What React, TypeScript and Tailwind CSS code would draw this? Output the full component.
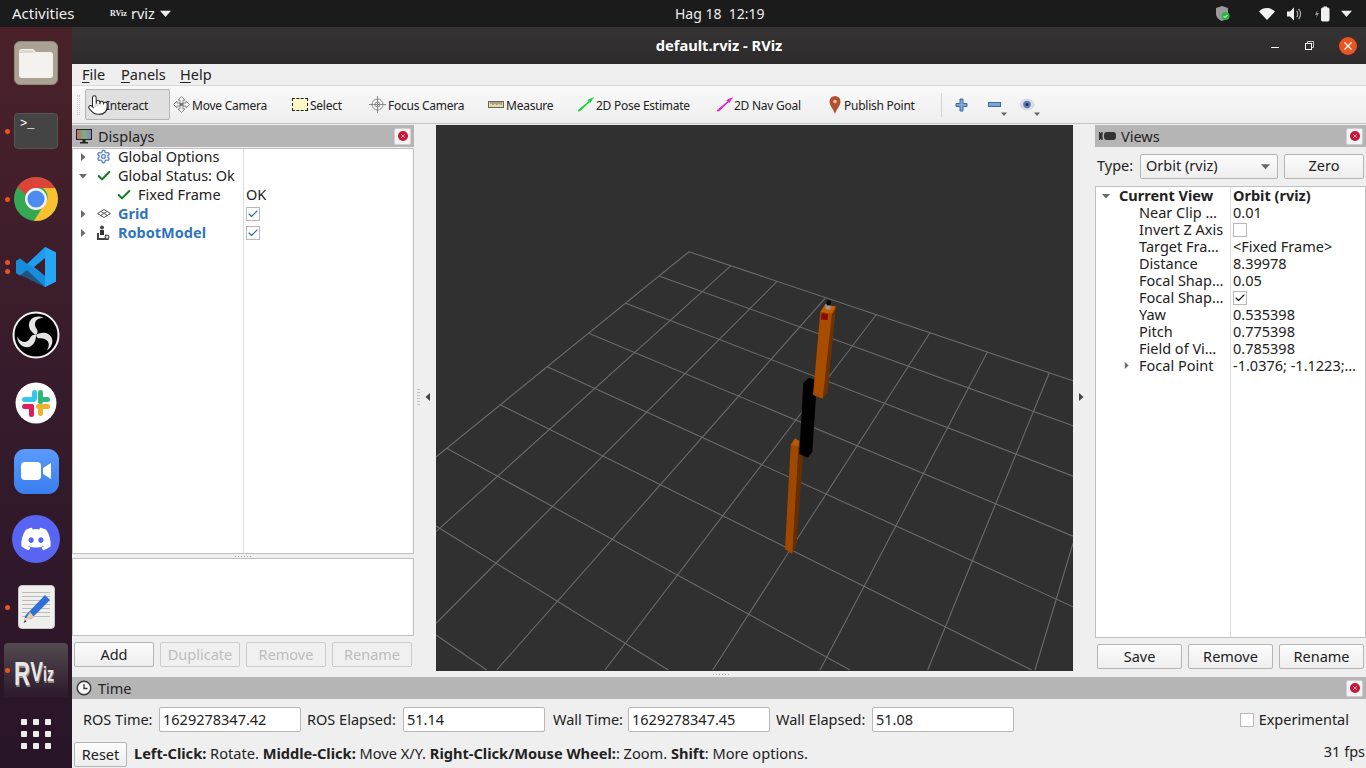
import React from "react";
import { Check, Pointer, Settings } from "lucide-react";
import { FaDiscord } from "react-icons/fa";

const Tri = ({ dir, c = "#6b6b6b", s = 8 }: { dir: "r" | "d" | "l"; c?: string; s?: number }) => (
  <svg width={s} height={s} viewBox="0 0 8 8" className="shrink-0">
    {dir === "r" && <polygon points="2,0 6.5,4 2,8" fill={c} />}
    {dir === "l" && <polygon points="6,0 1.5,4 6,8" fill={c} />}
    {dir === "d" && <polygon points="0,2 8,2 4,6.5" fill={c} />}
  </svg>
);

const Dot = () => <span className="w-[5px] h-[5px] rounded-full bg-[#e95420]" />;

const DockItem = ({ dots = 0, children, className = "" }: { dots?: number; children: React.ReactNode; className?: string }) => (
  <div className={`relative flex items-center justify-center w-[72px] h-[68px] shrink-0 ${className}`}>
    {dots > 0 && (
      <div className="absolute left-[5px] top-0 bottom-0 flex flex-col justify-center gap-[4px]">
        {Array.from({ length: dots }).map((_, i) => <Dot key={i} />)}
      </div>
    )}
    {children}
  </div>
);

const obsArm = "M24 24C18 21 14.500 14 19 8.500C22 5 28 4.500 32 7C27 6.500 22.500 9 23 14C23.500 18 28 20 24 24z";

const Dock = () => (
  <div className="w-[72px] shrink-0 flex flex-col bg-gradient-to-b from-[#4a2129] via-[#361b2c] to-[#281527] pt-[2px]">
    <DockItem>
      <div className="w-[44px] h-[44px] rounded-[6px] bg-[#aaa393] border border-[#8f897c] flex items-center justify-center">
        <svg width="34" height="30" viewBox="0 0 34 30">
          <path d="M3 1h11l3 3h14a3 3 0 0 1 3 3v20a3 3 0 0 1-3 3H3a3 3 0 0 1-3-3V4a3 3 0 0 1 3-3z" fill="#f4f2ee" />
          <path d="M0 5a3 3 0 0 1 3-3h10l3 3z" fill="#dcd8cf" />
        </svg>
      </div>
    </DockItem>
    <DockItem dots={1}>
      <div className="w-[44px] h-[36px] rounded-[4px] bg-[#444444] border border-[#555555] flex items-start pl-[5px] pt-[2px]">
        <span className="text-[12px] leading-[16px] text-white font-['Liberation_Mono',monospace]">&gt;_</span>
      </div>
    </DockItem>
    <DockItem dots={1}>
      <svg width="46" height="46" viewBox="0 0 46 46">
        <circle cx="23" cy="23" r="22" fill="#34a853" />
        <path d="M23 1a22 22 0 0 1 19.05 11H23a11 11 0 0 0-10.2 6.8L4.5 11A22 22 0 0 1 23 1z" fill="#db4437" />
        <path d="M42.05 12A22 22 0 0 1 21 44.9L31 29a11 11 0 0 0-1-17z" fill="#fbc02d" />
        <circle cx="23" cy="23" r="11" fill="#f2f2f2" />
        <circle cx="23" cy="23" r="8.6" fill="#4f8af0" />
      </svg>
    </DockItem>
    <DockItem dots={2}>
      <svg width="44" height="44" viewBox="0 0 44 44">
        <path d="M31 2l11 5.500v29L31 42 13 25l-7 5.500-4-2.500v-12l4-2.500 7 5.500z M31 13 20 22l11 9z" fill="#1f9cf0" fillRule="evenodd" />
        <path d="M31 2v40l11-5.500v-29z" fill="#26a7f5" />
        <path d="M2 16l4-2.500L31 31v11L2 28z" fill="#0f7fc9" opacity="0.55" />
      </svg>
    </DockItem>
    <DockItem>
      <svg width="48" height="48" viewBox="0 0 48 48">
        <circle cx="24" cy="24" r="22.500" fill="#000" stroke="#f2f2f2" strokeWidth="2" />
        <path d={obsArm} fill="#e4e4e4" />
        <path d={obsArm} fill="#e4e4e4" transform="rotate(120 24 24)" />
        <path d={obsArm} fill="#e4e4e4" transform="rotate(240 24 24)" />
      </svg>
    </DockItem>
    <DockItem>
      <svg width="42" height="42" viewBox="0 0 42 42">
        <circle cx="21" cy="21" r="20.500" fill="#fff" />
        <rect x="17" y="8" width="5" height="11" rx="2.500" fill="#36c5f0" />
        <rect x="7" y="15" width="14" height="5" rx="2.500" fill="#36c5f0" />
        <rect x="23" y="8" width="5" height="14" rx="2.500" fill="#2eb67d" />
        <rect x="24" y="15" width="11" height="5" rx="2.500" fill="#2eb67d" />
        <rect x="21" y="22" width="14" height="5" rx="2.500" fill="#ecb22e" />
        <rect x="23" y="23" width="5" height="11" rx="2.500" fill="#ecb22e" />
        <rect x="14" y="22" width="5" height="13" rx="2.500" fill="#e01e5a" />
        <rect x="7" y="22" width="12" height="5" rx="2.500" fill="#e01e5a" />
      </svg>
    </DockItem>
    <DockItem>
      <div className="w-[45px] h-[45px] rounded-[11px] bg-gradient-to-b from-[#5a9bfb] to-[#3a7df0] flex items-center justify-center">
        <svg width="30" height="18" viewBox="0 0 30 18">
          <rect x="0" y="0" width="20" height="18" rx="4" fill="#fff" />
          <path d="M22 6l8-5v16l-8-5z" fill="#fff" />
        </svg>
      </div>
    </DockItem>
    <DockItem>
      <div className="w-[48px] h-[48px] rounded-full bg-[#5865f2] flex items-center justify-center">
        <FaDiscord className="text-white w-[32px] h-[32px]" />
      </div>
    </DockItem>
    <DockItem dots={1}>
      <div className="w-[37px] h-[44px] rounded-[4px] bg-[#efefed] border border-[#c9c9c5] flex flex-col items-center gap-[3px] pt-[6px] relative overflow-hidden">
        {[0, 1, 2, 3, 4, 5, 6].map(i => <span key={i} className="w-[28px] h-[1px] bg-[#bcbcbc]" />)}
        <svg className="absolute left-[3px] top-[8px]" width="30" height="30" viewBox="0 0 30 30">
          <path d="M23 1l5 5L9 25l-6-1-1 5 1-7z" fill="#2e6fd8" />
          <path d="M8 18l4 5-4 2-5 1z" fill="#f1c9a0" />
          <path d="M3 26l-1.500 3 3-1.500z" fill="#333" />
        </svg>
      </div>
    </DockItem>
    <div className="relative mt-[2px] mx-[4px] w-[64px] h-[54px] rounded-t-[4px] bg-gradient-to-b from-[#544a50] to-[#2d1a2b] shrink-0 overflow-hidden">
      <span className="absolute left-[1px] top-0 bottom-0 flex items-center"><Dot /></span>
      <div className="absolute left-[10px] top-[16px] flex items-start origin-left scale-x-[0.68] font-['Liberation_Sans',sans-serif] font-bold text-[#e6e6e6] [text-shadow:1px_2px_0_#8a8a8a]">
        <span className="text-[33px] leading-[30px]">R</span>
        <span className="text-[28px] leading-[26px]">V</span>
        <span className="text-[21px] leading-[30px]">iz</span>
      </div>
    </div>
    <div className="flex-1 flex items-start justify-center pt-[22px]">
      <div className="grid grid-cols-3 gap-[6px]">
        {Array.from({ length: 9 }).map((_, i) => <span key={i} className="w-[6px] h-[6px] rounded-[1px] bg-[#eeeeee]" />)}
      </div>
    </div>
  </div>
);

const TopBar = () => (
  <div className="h-[27px] shrink-0 bg-[#1b1b1b] text-[#eeeeee] text-[14px] flex items-center relative">
    <span className="ml-[12px] w-[98px] text-[15px]">Activities</span>
    <span className="text-[8px] font-bold w-[21px] font-['Liberation_Serif',serif]">RViz</span>
    <span className="text-[14.500px]">rviz</span>
    <span className="ml-[5px]"><Tri dir="d" c="#eeeeee" s={11} /></span>
    <span className="absolute left-[675px]">Hag 18&nbsp; 12:19</span>
    <div className="ml-auto flex items-center pr-[14px]">
      <svg width="16" height="17" viewBox="0 0 16 17" className="mr-[28px]">
        <path d="M7 1l6 2v6c0 3-3 6-6 7-3-1-6-4-6-7V3z" fill="#9a9a9a" />
        <circle cx="10.500" cy="11" r="4" fill="#2fb34a" />
        <path d="M8.500 11l1.500 1.500 2.500-2.500" stroke="#fff" strokeWidth="1" fill="none" />
      </svg>
      <svg width="16" height="12" viewBox="0 0 16 12" className="mr-[12px]">
        <path d="M0 3.500a11 11 0 0 1 16 0L8 12z" fill="#f4f4f4" />
      </svg>
      <svg width="16" height="14" viewBox="0 0 16 14" className="mr-[11px]">
        <path d="M0 4.500h3l4-4v13l-4-4H0z" fill="#f0f0f0" />
        <path d="M9.500 4a4 4 0 0 1 0 6M11.500 2a7 7 0 0 1 0 10" stroke="#aaa" strokeWidth="1.200" fill="none" />
      </svg>
      <svg width="16" height="16" viewBox="0 0 16 16" className="mr-[11px]">
        <path d="M3.500 4L1 9h2l-1 3 3-5H3z" fill="#9a9a9a" />
        <rect x="7.500" y="2" width="7.500" height="13" rx="1" fill="#f0f0f0" stroke="#f0f0f0" />
        <rect x="9.500" y="0.500" width="3.500" height="2" fill="#f0f0f0" />
      </svg>
      <Tri dir="d" c="#eeeeee" s={11} />
    </div>
  </div>
);

const TitleBar = () => (
  <div className="h-[37px] shrink-0 bg-gradient-to-b from-[#353333] to-[#2c2a2a] relative flex items-center justify-center text-white font-bold text-[14.700px]">
    <span>default.rviz - RViz</span>
    <div className="absolute right-[9px] top-0 bottom-0 flex items-center">
      <span className="w-[8px] h-[1px] bg-white mt-[4px] mr-[26px]" />
      <svg width="9" height="9" viewBox="0 0 9 9" className="mr-[25px]">
        <rect x="0.500" y="2.500" width="6" height="6" fill="none" stroke="#fff" />
        <path d="M2.500 2.500V.5h6v6h-2" fill="none" stroke="#ccc" />
      </svg>
      <span className="w-[18px] h-[18px] rounded-full bg-[#e95420] flex items-center justify-center">
        <svg width="8" height="8" viewBox="0 0 8 8"><path d="M.5.5l7 7M7.500.5l-7 7" stroke="#fff" strokeWidth="1.200" /></svg>
      </span>
    </div>
  </div>
);

const MenuItem = ({ first, rest, w }: { first: string; rest: string; w: string }) => (
  <span className={w}><span className="underline underline-offset-2">{first}</span>{rest}</span>
);

const MenuBar = () => (
  <div className="h-[22px] shrink-0 bg-[#efefef] border-b border-[#d8d8d8] flex items-center pl-[10px] text-[14.500px] text-[#222222]">
    <MenuItem first="F" rest="ile" w="w-[39px]" />
    <MenuItem first="P" rest="anels" w="w-[59px]" />
    <MenuItem first="H" rest="elp" w="" />
  </div>
);

const Tool = ({ icon, label, w, gap = "gap-[2px]" }: { icon: React.ReactNode; label: string; w: string; gap?: string }) => (
  <div className={`flex items-center shrink-0 ${gap} ${w}`}>
    {icon}
    <span className="pt-[3px]">{label}</span>
  </div>
);

const Arrow = ({ c }: { c: string }) => (
  <svg width="16" height="15" viewBox="0 0 17 15">
    <path d="M1 14.500l2-1L15.500 1.500l1-1-5 2 1 1L0 14z" fill={c} stroke={c} strokeWidth="1" />
    <path d="M16 .5l-6 2.500 3 3z" fill={c} />
  </svg>
);

const ToolBar = () => (
  <div className="h-[38px] shrink-0 bg-gradient-to-b from-[#f9f9f9] to-[#eeeeee] border-b border-[#c4c4c4] flex items-center text-[12px] text-[#222222] tracking-[-0.25px]">
    <div className="ml-[5px] w-[3px] h-[20px] border-x border-dotted border-[#c8c8c8]" />
    <div className="ml-[5px] w-[85px] h-[31px] rounded-[2px] border border-[#b4b4b4] bg-[#e0e0e0] flex items-center pl-[1px] shrink-0">
      <Pointer size={22} strokeWidth={1.100} className="text-[#222222] fill-white shrink-0 -mr-[3px]" />
      <span className="pt-[3px]">Interact</span>
    </div>
    <span className="w-[3px] shrink-0" />
    <Tool w="w-[119px]" label="Move Camera" icon={
      <svg width="17" height="17" viewBox="0 0 17 17"><path d="M8.500.5L12 4h-2v3h3V5l3.500 3.500L13 12v-2h-3v3h2l-3.500 3.500L5 13h2v-3H4v2L.5 8.500 4 5v2h3V4H5z" fill="#f4f4f4" stroke="#8a8a8a" /><rect x="6.500" y="7" width="4" height="3" fill="#777" /></svg>
    } />
    <Tool w="w-[77px]" label="Select" icon={<span className="block w-[16px] h-[13px] bg-[#fdf8c4] border border-dashed border-[#222222]" />} />
    <Tool w="w-[119px]" label="Focus Camera" icon={
      <svg width="17" height="17" viewBox="0 0 17 17" fill="none" stroke="#8a8a8a"><circle cx="8.500" cy="8.500" r="5.500" fill="#f4f4f4" /><circle cx="8.500" cy="8.500" r="2.500" /><path d="M8.500 0v17M0 8.500h17" /></svg>
    } />
    <Tool w="w-[90px]" label="Measure" icon={
      <svg width="16" height="7" viewBox="0 0 16 7"><rect x=".5" y=".5" width="15" height="6" fill="#e3d9a4" stroke="#666" /><path d="M3 1v2M5 1v3M7 1v2M9 1v3M11 1v2M13 1v3" stroke="#555" strokeWidth=".8" /></svg>
    } />
    <Tool w="w-[139px]" label="2D Pose Estimate" icon={<Arrow c="#18d43a" />} />
    <Tool w="w-[111px]" gap="gap-[1px]" label="2D Nav Goal" icon={<Arrow c="#ee1ccf" />} />
    <Tool w="w-[113px]" label="Publish Point" icon={
      <svg width="14" height="18" viewBox="0 0 14 18"><path d="M7 0a5.500 5.500 0 0 1 5.500 5.500C12.500 10 8.500 13 7 18 5.500 13 1.500 10 1.500 5.500A5.500 5.500 0 0 1 7 0z" fill="#b0512f" /><circle cx="7" cy="5.500" r="1.800" fill="#f0c0a0" /></svg>
    } />
    <div className="w-[1px] h-[24px] bg-[#d4d4d4] shrink-0" />
    <svg width="13" height="14" viewBox="0 0 13 14" className="ml-[13px] shrink-0"><path d="M5 1h3v4.500h4v3H8V13H5V8.500H1v-3h4z" fill="#7ea5d8" stroke="#3d6ba8" /></svg>
    <div className="relative ml-[20px] w-[13px] h-[14px] flex items-center shrink-0">
      <span className="block w-[13px] h-[5px] bg-[#7ea5d8] border border-[#3d6ba8]" />
      <span className="absolute left-[13px] top-[13px]"><Tri dir="d" c="#666666" s={6} /></span>
    </div>
    <div className="relative ml-[18px] w-[16px] h-[14px] flex items-center shrink-0">
      <svg width="16" height="13" viewBox="0 0 15 12"><path d="M0 6c2-4 4-5.500 7.500-5.500S13 2 15 6c-2 4-4 5.500-7.500 5.500S2 10 0 6z" fill="#dcdcdc" /><circle cx="7.500" cy="6" r="3.500" fill="#5a7cc0" /><circle cx="7.500" cy="6" r="1.500" fill="#1f2f58" /></svg>
      <span className="absolute left-[15px] top-[13px]"><Tri dir="d" c="#666666" s={6} /></span>
    </div>
  </div>
);

const PanelClose = () => (
  <span className="w-[17px] h-[17px] rounded-[2px] bg-[#f4f4f4] border border-[#cfcfcf] flex items-center justify-center">
    <span className="w-[10px] h-[10px] rounded-full bg-[#c9153a] flex items-center justify-center">
      <svg width="4" height="4" viewBox="0 0 4 4"><path d="M0 0l4 4M4 0L0 4" stroke="#f5c0c8" strokeWidth=".8" /></svg>
    </span>
  </span>
);

const PanelHeader = ({ icon, title, h = "h-[22px]" }: { icon: React.ReactNode; title: string; h?: string }) => (
  <div className={`${h} shrink-0 bg-[#b5b5b5] flex items-center pl-[4px] pr-[3px] text-[14.500px] text-[#222222]`}>
    <span className="w-[22px] flex items-center">{icon}</span>
    <span className="pt-[1px]">{title}</span>
    <span className="ml-auto"><PanelClose /></span>
  </div>
);

const Btn = ({ label, w, disabled = false, h = "h-[25px]" }: { label: string; w: string; disabled?: boolean; h?: string }) => (
  <div className={`${w} ${h} shrink-0 rounded-[2px] border flex items-center justify-center text-[14.500px] ${disabled ? "border-[#cccccc] text-[#bdbdbd] bg-[#f0f0f0]" : "border-[#b4b4b4] text-[#222222] bg-gradient-to-b from-[#fcfcfc] to-[#eeeeee]"}`}>
    {label}
  </div>
);

const CheckBox = ({ on, c = "#2a6ab0" }: { on: boolean; c?: string }) => (
  <span className="w-[14px] h-[14px] border border-[#b8b8b8] bg-white flex items-center justify-center shrink-0">
    {on && <Check size={12} strokeWidth={2.200} color={c} />}
  </span>
);

const Row = ({ arrow, icon, label, indent = "ml-[9px]", blue = false, value }: { arrow?: "r" | "d"; icon?: React.ReactNode; label: string; indent?: string; blue?: boolean; value?: React.ReactNode }) => (
  <div className="h-[19px] flex items-center">
    <div className="w-[171px] flex items-center shrink-0">
      <span className="w-[7px] ml-[6px] flex items-center">{arrow && <Tri dir={arrow} s={8} />}</span>
      <span className={`${indent} w-[17px] flex items-center justify-center shrink-0`}>{icon}</span>
      <span className={`ml-[6px] whitespace-nowrap ${blue ? "font-bold text-[#2f74c0]" : "text-[#222222]"}`}>{label}</span>
    </div>
    <div className="pl-[2px] flex items-center text-[#222222]">{value}</div>
  </div>
);

const Green = () => <Check size={16} strokeWidth={3} color="#0e7a1e" />;

const Displays = () => (
  <div className="w-[342px] shrink-0 flex flex-col pt-[1px]">
    <PanelHeader title="Displays" icon={
      <svg width="16" height="15" viewBox="0 0 16 15">
        <rect x=".5" y=".5" width="15" height="10" fill="url(#mon)" stroke="#222" />
        <defs><linearGradient id="mon" x1="0" x2="1"><stop offset="0" stopColor="#c86a6a" /><stop offset=".5" stopColor="#7cb07c" /><stop offset="1" stopColor="#8a80c8" /></linearGradient></defs>
        <path d="M6.500 11h3v2h-3zM4 13h8v1.500H4z" fill="#222" />
      </svg>
    } />
    <div className="mt-[1px] h-[406px] bg-white border border-[#c0c0c0] flex flex-col text-[14.500px] relative">
      <div className="absolute left-[170px] top-0 bottom-0 w-[1px] bg-[#dcdcdc]" />
      <div className="-mt-[2px]" />
      <Row arrow="r" label="Global Options" icon={<Settings size={15} color="#5a86cf" strokeWidth={2.200} />} />
      <Row arrow="d" label="Global Status: Ok" icon={<Green />} />
      <Row label="Fixed Frame" indent="ml-[29px]" icon={<Green />} value={<span>OK</span>} />
      <Row arrow="r" blue label="Grid" value={<CheckBox on />} icon={
        <svg width="14" height="9" viewBox="0 0 14 9"><path d="M7 .5l6.500 4L7 8.500.5 4.500zM4 2.500l6.500 4M10 2.500l-6.500 4" fill="none" stroke="#444" strokeWidth=".9" /></svg>
      } />
      <Row arrow="r" blue label="RobotModel" value={<CheckBox on />} icon={
        <svg width="15" height="16" viewBox="0 0 15 16"><circle cx="6" cy="2.500" r="2" fill="#445" /><rect x="4" y="5" width="4" height="5" fill="#333" /><path d="M1 15V8h2v5h6V9l4 6z" fill="#444" /><circle cx="11" cy="12" r="2" fill="#ddd" stroke="#333" /></svg>
      } />
    </div>
    <div className="h-[4px] flex items-center justify-center gap-[2px]">
      {[0, 1, 2, 3, 4, 5].map(i => <span key={i} className="w-[1px] h-[1px] bg-[#aaaaaa]" />)}
    </div>
    <div className="h-[78px] bg-white border border-[#c0c0c0]" />
    <div className="mt-[6px] pl-[2px] flex gap-[6px]">
      <Btn label="Add" w="w-[80px]" />
      <Btn label="Duplicate" w="w-[80px]" disabled />
      <Btn label="Remove" w="w-[80px]" disabled />
      <Btn label="Rename" w="w-[80px]" disabled />
    </div>
  </div>
);

const G = "#6b6b6b";
const gridLines: number[][] = [
  [689, 251.7, 1073, 380.8], [659, 276, 1073, 425.8], [625.7, 303.3, 1073, 476.2], [588.7, 333.3, 1073, 536.2],
  [547.3, 366.7, 1073, 606.8], [500.7, 405, 1031.7, 670], [446.7, 448.3, 850, 670], [436, 526, 668.3, 670], [436, 635, 486.7, 670],
  [689, 251.7, 436, 457], [731, 265.7, 436, 531.7], [776.7, 281.7, 436, 623.3], [825, 298.3, 496.7, 670], [876, 315, 605, 670],
  [930, 332.7, 712.7, 670], [987.3, 352.3, 820, 670], [1049.3, 372.7, 927.7, 670], [1073, 543.3, 1035, 670],
];

const Viewport = () => (
  <div className="w-[637px] shrink-0 flex flex-col pt-[1px]">
    <div className="h-[546px] bg-[#303030]">
      <svg width="637" height="546" viewBox="436 125 637 546" className="block">
        {gridLines.map((l, i) => <line key={i} x1={l[0]} y1={l[1]} x2={l[2]} y2={l[3]} stroke={G} strokeWidth="1.100" />)}
        <polygon points="798.500,447 799.300,441 803,455 796.700,543.300 792.300,554" fill="#672e00" />
        <polygon points="790.700,445 798.500,447 792.300,554 785,549.300" fill="#a04800" />
        <polygon points="790.700,445 795,438.300 799.300,441 798.500,447" fill="#bd5700" />
        <polygon points="803.300,383 809,377.700 815,380 816,396 812.300,452 807.700,457.700 799.300,454" fill="#000000" />
        <polygon points="832,314 836,306.500 827.300,393 822.700,398.700" fill="#6e3200" />
        <polygon points="820.300,312 832,314 822.700,398.700 813,395" fill="#a84c00" />
        <polygon points="820.300,312 825,304.500 836,306.500 832,314" fill="#c85c00" />
        <polygon points="825.500,304 830.500,304 830.500,310 825.500,309" fill="#9a9a9a" />
        <rect x="826.500" y="300" width="4.500" height="5.500" rx="1.500" fill="#0a0a0a" />
        <polygon points="821.500,313 828,314 827.500,320 821,319.500" fill="#8b0a00" />
      </svg>
    </div>
    <div className="flex-1 flex items-center gap-[2px] pl-[277px]">
      {[0, 1, 2, 3, 4, 5].map(i => <span key={i} className="w-[1px] h-[1px] bg-[#aaaaaa]" />)}
    </div>
  </div>
);

const Gutter = ({ dir, dots = false }: { dir: "l" | "r"; dots?: boolean }) => (
  <div className="w-[22px] shrink-0 flex items-center">
    <div className="mb-[8px] flex items-center w-full">
      {dots ? (
        <div className="ml-[3px] flex flex-col gap-[2px] w-[3px]">
          {[0, 1, 2, 3, 4, 5].map(i => <span key={i} className="w-[3px] h-[1px] bg-[#c4c4c4]" />)}
        </div>
      ) : null}
      <span className="ml-[4px]"><Tri dir={dir} c="#444444" s={8} /></span>
    </div>
  </div>
);

const views: [string, React.ReactNode, boolean?][] = [
  ["Near Clip …", "0.01"],
  ["Invert Z Axis", <CheckBox on={false} />],
  ["Target Fra…", "<Fixed Frame>"],
  ["Distance", "8.39978"],
  ["Focal Shap…", "0.05"],
  ["Focal Shap…", <CheckBox on c="#111111" />],
  ["Yaw", "0.535398"],
  ["Pitch", "0.775398"],
  ["Field of Vi…", "0.785398"],
  ["Focal Point", "-1.0376; -1.1223;…", true],
];

const Views = () => (
  <div className="w-[271px] shrink-0 flex flex-col pt-[1px]">
    <PanelHeader title="Views" icon={
      <svg width="17" height="10" viewBox="0 0 17 10"><path d="M0 1l3 2.500V1v8-2.500L0 9z" fill="#333" stroke="#333" /><rect x="5" y="1" width="12" height="8" rx="3" fill="#333" /></svg>
    } />
    <div className="h-[39px] shrink-0 flex items-center pl-[2px] pb-[1px] text-[14.500px] text-[#222222]">
      <span className="w-[43px]">Type:</span>
      <div className="w-[138px] h-[25px] rounded-[2px] border border-[#b4b4b4] bg-gradient-to-b from-[#fcfcfc] to-[#eeeeee] flex items-center px-[5px]">
        <span>Orbit (rviz)</span>
        <span className="ml-auto mr-[2px]"><Tri dir="d" c="#666666" s={9} /></span>
      </div>
      <span className="ml-[6px]"><Btn label="Zero" w="w-[80px]" /></span>
    </div>
    <div className="h-[452px] bg-white border border-[#c0c0c0] relative text-[14.500px] text-[#222222] leading-[17px]">
      <div className="absolute left-[134px] top-0 bottom-0 w-[1px] bg-[#dcdcdc]" />
      <div className="h-[17px] flex items-center font-bold">
        <span className="w-[7px] ml-[6px] flex items-center"><Tri dir="d" s={8} /></span>
        <span className="ml-[10px] w-[114px]">Current View</span>
        <span>Orbit (rviz)</span>
      </div>
      {views.map(([k, v, arrow], i) => (
        <div key={i} className="h-[17px] flex items-center">
          <span className="w-[43px] pl-[27px] flex items-center shrink-0">{arrow && <Tri dir="r" s={7} />}</span>
          <span className="w-[94px] whitespace-nowrap shrink-0">{k}</span>
          <span className="whitespace-nowrap">{v}</span>
        </div>
      ))}
    </div>
    <div className="mt-[6px] pl-[2px] flex gap-[6px]">
      <Btn label="Save" w="w-[85px]" />
      <Btn label="Remove" w="w-[85px]" />
      <Btn label="Rename" w="w-[85px]" />
    </div>
  </div>
);

const Field = ({ label, value, lw, ml }: { label: string; value: string; lw: string; ml: string }) => (
  <div className={`flex items-center ${ml}`}>
    <span className={`${lw} whitespace-nowrap`}>{label}</span>
    <div className="w-[142px] h-[25px] rounded-[2px] border border-[#b8b8b8] bg-white flex items-center px-[3px]">{value}</div>
  </div>
);

const TimePanel = () => (
  <div className="flex-1 flex flex-col text-[14.500px] text-[#222222]">
    <PanelHeader title="Time" h="h-[22px]" icon={
      <svg width="16" height="16" viewBox="0 0 16 16"><circle cx="8" cy="8" r="6.800" fill="#f8f8f8" stroke="#333" strokeWidth="1.400" /><path d="M8 4v4.500h3.500" fill="none" stroke="#333" strokeWidth="1.300" /></svg>
    } />
    <div className="h-[42px] shrink-0 flex items-center pb-[1px]">
      <Field ml="ml-[11px]" lw="w-[76px]" label="ROS Time:" value="1629278347.42" />
      <Field ml="ml-[6px]" lw="w-[96px]" label="ROS Elapsed:" value="51.14" />
      <Field ml="ml-[8px]" lw="w-[75px]" label="Wall Time:" value="1629278347.45" />
      <Field ml="ml-[6px]" lw="w-[96px]" label="Wall Elapsed:" value="51.08" />
      <div className="ml-auto mr-[17px] flex items-center gap-[5px]">
        <CheckBox on={false} />
        <span>Experimental</span>
      </div>
    </div>
    <div className="flex-1 flex items-center pl-[2px] pr-[1px]">
      <Btn label="Reset" w="w-[53px]" h="h-[25px]" />
      <span className="ml-[7px] text-[14.600px] pb-[2px]"><b>Left-Click:</b> Rotate. <b>Middle-Click:</b> Move X/Y. <b>Right-Click/Mouse Wheel:</b>: Zoom. <b>Shift</b>: More options.</span>
      <span className="ml-auto pb-[6px]">31 fps</span>
    </div>
  </div>
);

export default function App() {
  return (
    <div className="w-[1366px] h-[768px] overflow-hidden flex flex-col font-['Noto_Sans',sans-serif] bg-[#efefef]">
      <TopBar />
      <div className="flex-1 flex min-h-0">
        <Dock />
        <div className="flex-1 flex flex-col min-w-0">
          <TitleBar />
          <MenuBar />
          <ToolBar />
          <div className="h-[553px] shrink-0 flex">
            <Displays />
            <Gutter dir="l" dots />
            <Viewport />
            <Gutter dir="r" />
            <Views />
          </div>
          <TimePanel />
        </div>
      </div>
    </div>
  );
}
